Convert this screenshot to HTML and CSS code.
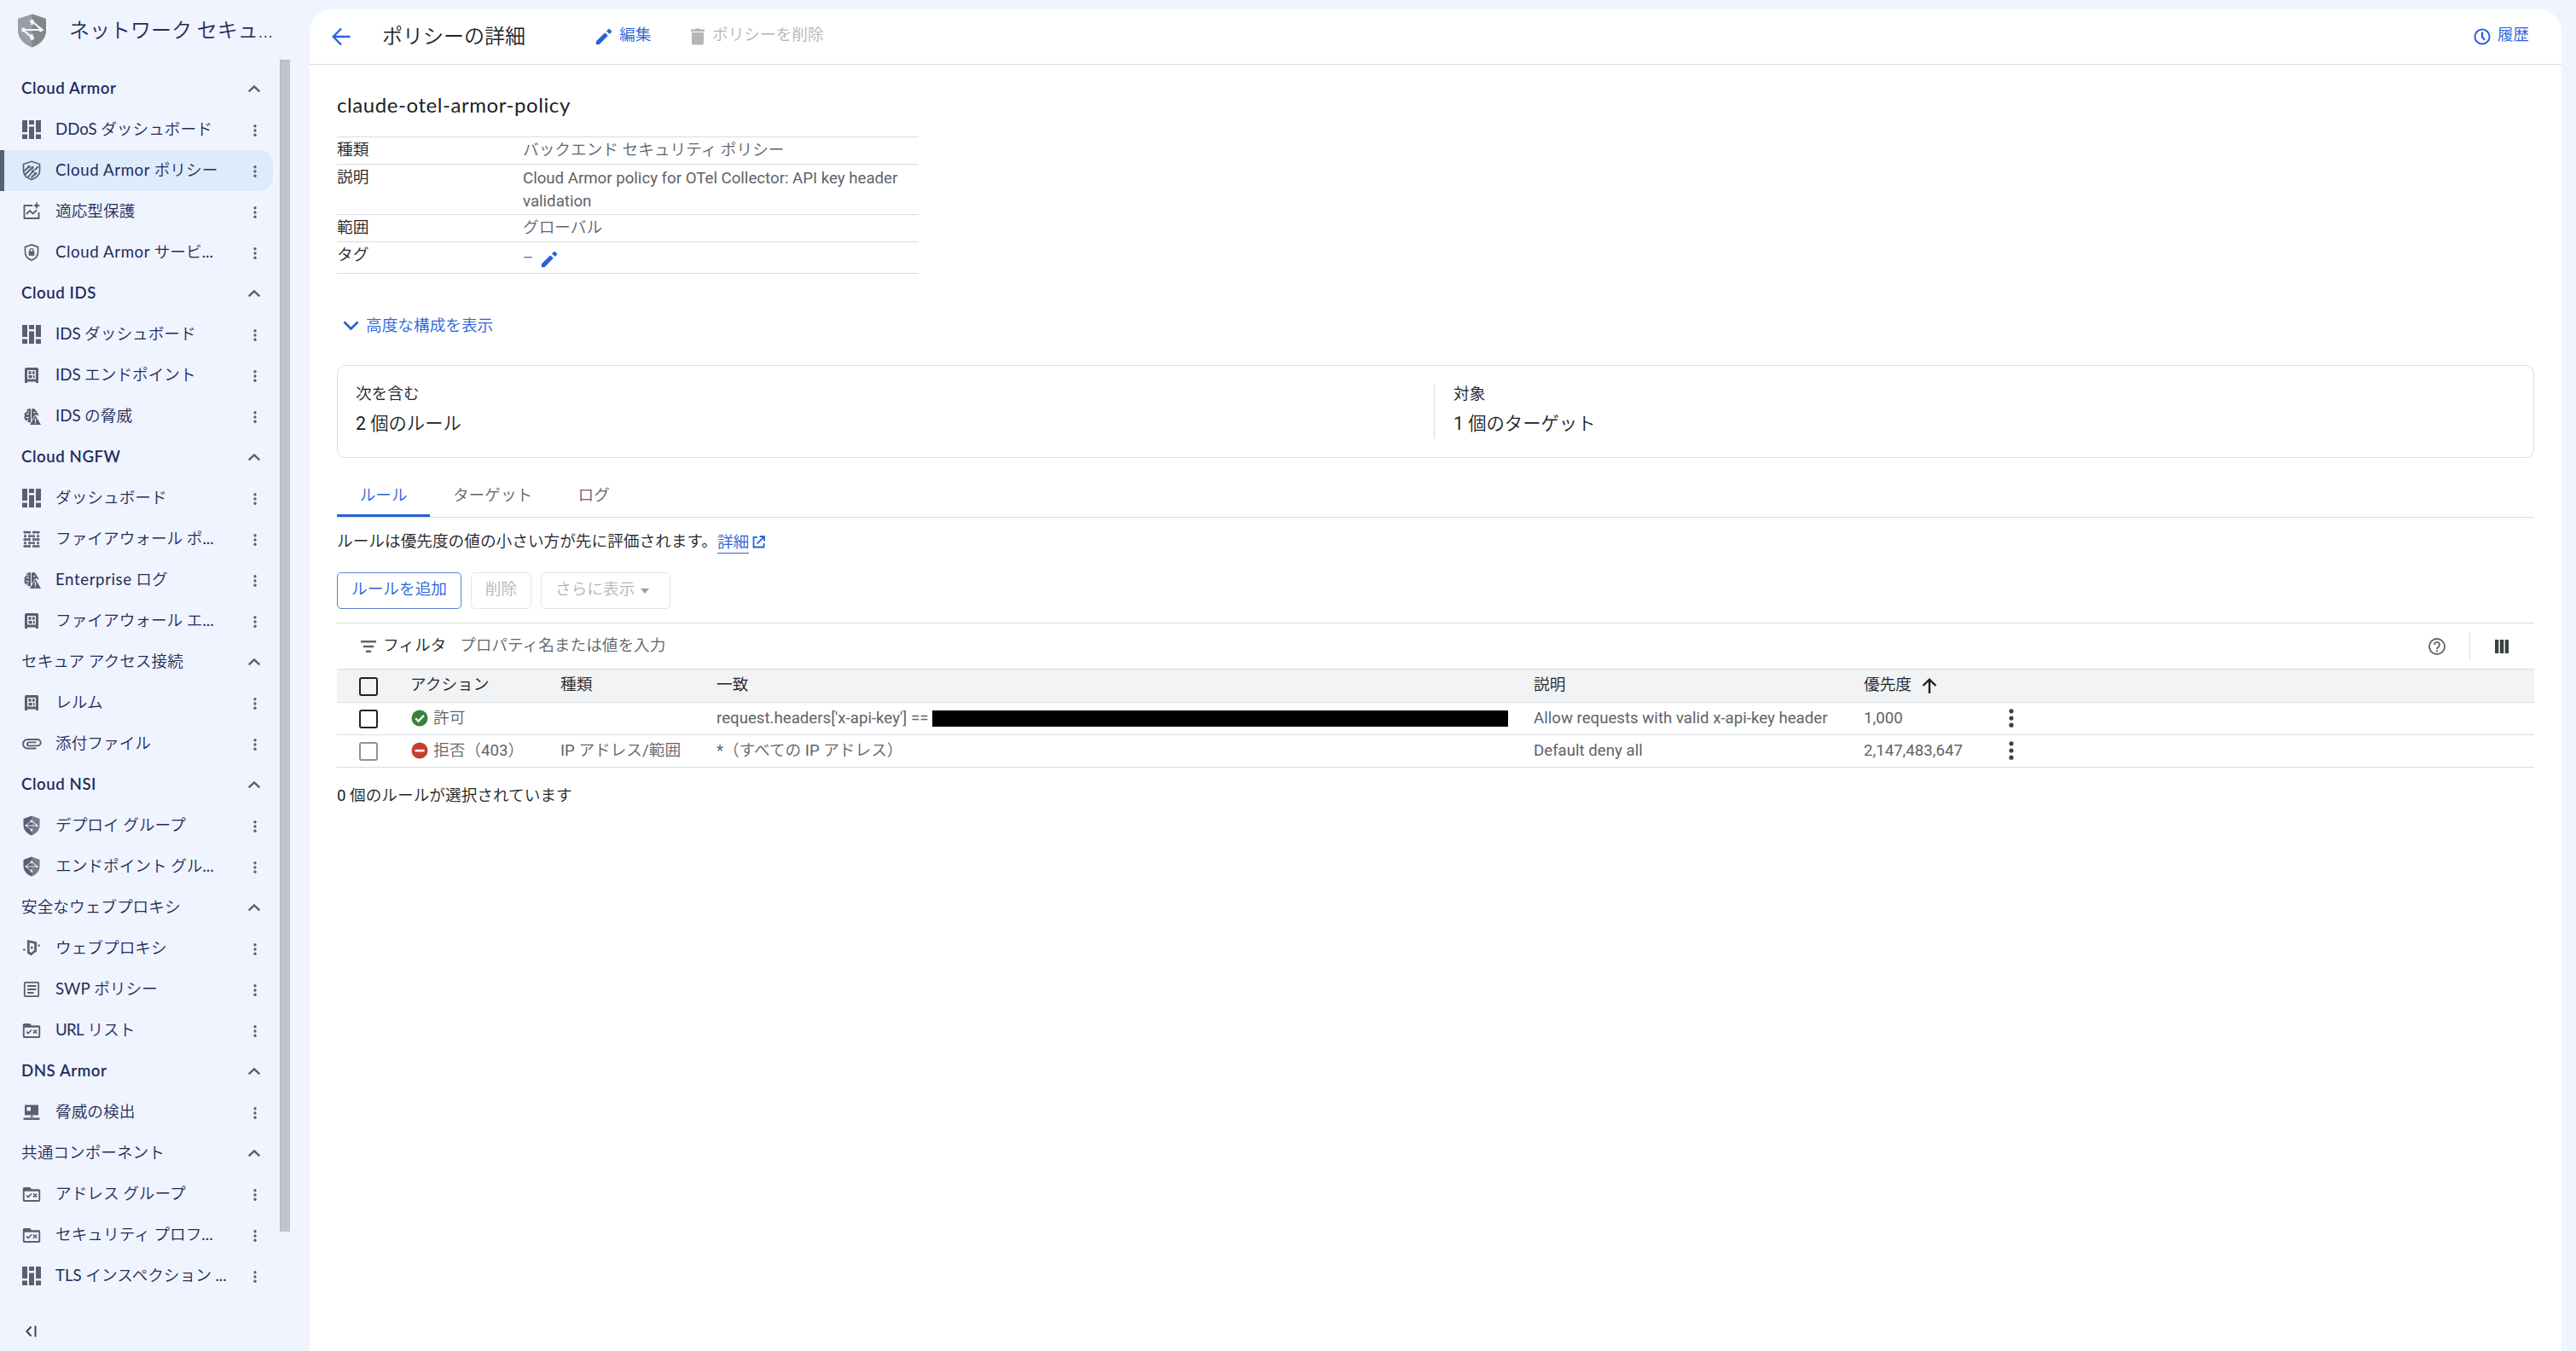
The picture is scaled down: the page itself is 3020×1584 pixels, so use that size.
FILE: index.html
```html
<!DOCTYPE html>
<html lang="ja">
<head>
<meta charset="utf-8">
<title>ポリシーの詳細</title>
<link rel="stylesheet" href="styles.css">
</head>
<body>
<svg class="sprite" aria-hidden="true">
  <symbol id="dash" viewBox="0 0 24 24"><path d="M1 1h6v14H1zM1 17.5h6V23H1zM9 1h6v5H9zM9 8.500h6V23H9zM17 1h6v14h-6zM17 17.500h6V23h-6z"/></symbol>
  <symbol id="armor" viewBox="0 0 24 24"><path d="M12 1.300 21.500 4.500V12c0 5-4 8.700-9.500 10.700C6.500 20.700 2.500 17 2.500 12V4.500z" fill="none" stroke="currentColor" stroke-width="1.700"/><path d="M3.500 12.500 9 7.300M4.500 16.500l8.500-8M8 19.500l5.500-6.500M11.500 20.500l5-5M15.500 11.500 20 7" fill="none" stroke="currentColor" stroke-width="1.900"/><circle cx="9" cy="7.500" r="1.700"/><circle cx="13" cy="8.500" r="1.700"/><circle cx="13.500" cy="12.700" r="1.700"/><circle cx="16.500" cy="15.500" r="1.700"/></symbol>
  <symbol id="adaptive" viewBox="0 0 24 24"><path d="M13 5H3.500v15h17v-7" fill="none" stroke="currentColor" stroke-width="1.900"/><path d="m6 15 4-4 3.500 3.500L18 10.500" fill="none" stroke="currentColor" stroke-width="1.900"/><path d="m18 .5 1.300 3.200L22.500 5l-3.200 1.300L18 9.500l-1.300-3.200L13.500 5l3.200-1.300z"/></symbol>
  <symbol id="lockshield" viewBox="0 0 24 24"><path d="m12 2.900 7.500 2.800v6c0 4.400-3 7.600-7.500 9.400-4.500-1.800-7.500-5-7.500-9.400v-6z" fill="none" stroke="currentColor" stroke-width="1.700"/><path d="M8.700 10.500h6.600v5.300H8.700z"/><path d="M10 11V9.700a2 2 0 0 1 4 0V11" fill="none" stroke="currentColor" stroke-width="1.300"/></symbol>
  <symbol id="endpoint" viewBox="0 0 24 24"><path fill-rule="evenodd" d="M5.500 3h13q1.500 0 1.500 1.500V21h-3v-1.500H7V21H4V4.500Q4 3 5.500 3zM7 6v10.500h10V6zM8.500 7.300h3.200v3.500H8.500zM13 7.300h2.600v3.500H13zM8.500 12h4.200v3.300H8.500zM14 12h1.700v3.300H14z"/></symbol>
  <symbol id="threat" viewBox="0 0 24 24"><path d="M11 3.500v16L8 19l-2-2-2-1-.7-3L4 11l-.6-2L6 7l.5-2.500L9 3zM12 3.500 15 3l2 2 1.500 2.500L20 10v2l-2.500-2-2 1-2.500 4.500-1 1z"/><path d="M6 9.500h3M5.500 13.500H9M14 7.500h2.500M8 5.500v2M7.500 15.500v2" stroke="#f0f4fe" stroke-width="1.100"/><path fill-rule="evenodd" d="M16.500 11 23 22H10zM15.800 14.500v3.700h1.400v-3.700zM15.800 19.200v1.400h1.400v-1.400z"/></symbol>
  <symbol id="wall" viewBox="0 0 24 24"><path d="M2.500 2.700h8.500v2.500H2.500zM13 2.700h8.500v2.500H13zM3 7.500h3v2.300H3zM8 7.500h8v2.300H8zM18 7.500h3v2.300h-3zM2.500 11.300H11v2.500H2.500zM13 11.300h8.500v2.500H13zM3 15.500h3v2.300H3zM8 15.500h8v2.300H8zM18 15.500h3v2.300h-3zM2.500 19.200H11v2.500H2.500zM13 19.200h8.500v2.500H13z"/><path d="M4.500 4v16M9.500 4v16M14.500 4v16M19.500 4v16" stroke="currentColor" stroke-width="1" opacity=".6"/></symbol>
  <symbol id="clip" viewBox="0 0 24 24"><path d="M17.500 17.500H7.300a5.200 5.200 0 0 1 0-10.500H19a3.700 3.700 0 0 1 0 7.400H9a2 2 0 0 1 0-4h8.500" fill="none" stroke="currentColor" stroke-width="1.900"/></symbol>
  <symbol id="net" viewBox="0 0 24 24"><path d="M12 .5 21.500 4v7.500c0 5.700-4 10-9.500 12-5.500-2-9.500-6.300-9.500-12V4z"/><path d="M12 .5 21.500 4v7.500c0 5.700-4 10-9.500 12z" fill="#fff" opacity=".18"/><path d="M5.500 12h13L12 6v2.500M5.500 12l6.500 5.500V15M12 6 5.500 12M18.500 12 12 6" fill="none" stroke="#e8eefa" stroke-width="1"/><g fill="#e8eefa"><circle cx="5.800" cy="12" r="1.300"/><circle cx="18.200" cy="12" r="1.300"/><circle cx="12" cy="6.500" r="1.300"/><circle cx="12" cy="17.500" r="1.300"/></g></symbol>
  <symbol id="proxy" viewBox="0 0 24 24"><path fill-rule="evenodd" d="M6.900 2 18 4.300v11.500l-3.500 2-2.800 2.700-4.800-3zM9.600 5.300v10.500l2 1.300 3.600-3.100V6.600z"/><circle cx="12.300" cy="11" r="1.500"/><circle cx="3.400" cy="13.500" r="1.300"/><circle cx="20.600" cy="8.500" r="1.300"/></symbol>
  <symbol id="doc" viewBox="0 0 24 24"><rect x="3.800" y="3.800" width="16.400" height="16.400" rx="1" fill="none" stroke="currentColor" stroke-width="1.800"/><path d="M7 7h10.500v1.900H7zM7 11h10.500v1.900H7zM7 15h7.500v1.900H7z"/></symbol>
  <symbol id="folder" viewBox="0 0 24 24"><path fill-rule="evenodd" d="M3.500 4H10l2 2.200h8.500q1.700 0 1.700 1.700v11.300q0 1.700-1.700 1.700h-17q-1.700 0-1.700-1.700V5.700Q1.800 4 3.500 4zM3.700 8.700v10.300h16.600V8.700z"/><path d="m6 13.500 2 2 4-4M14 11.500l4.200 4.200M18.200 11.500 14 15.700" fill="none" stroke="currentColor" stroke-width="1.700"/></symbol>
  <symbol id="detect" viewBox="0 0 24 24"><path fill-rule="evenodd" d="M4 3.500h16v12H4zM6.500 6v4.500H11V6zM11 15h2.500v4H11zM2.500 18.500h19V21h-19z"/></symbol>
  <symbol id="more" viewBox="0 0 24 24"><circle cx="12" cy="5" r="2.200"/><circle cx="12" cy="12" r="2.200"/><circle cx="12" cy="19" r="2.200"/></symbol>
  <symbol id="up" viewBox="0 0 24 24"><path d="m2.500 17 9.500-9 9.500 9" fill="none" stroke="currentColor" stroke-width="3.700"/></symbol>
  <symbol id="pencil" viewBox="0 0 24 24"><path d="M1 18.600V23h4.400L17.800 10.600l-4.400-4.400zM22.600 5.800a1.400 1.400 0 0 0 0-2l-2.400-2.400a1.400 1.400 0 0 0-2 0l-2.600 2.600 4.400 4.400z"/></symbol>
</svg>
<div class="app">
  <aside class="side">
    <header class="side-head">
      <svg class="brand" viewBox="0 0 33 40"><path d="M16.500.5 33 6v13.500C33 29 26 36 16.500 39.500 7 36 0 29 0 19.500V6z" fill="#9b9ea4"/><path d="M16.500.5 33 6v13.500C33 29 26 36 16.500 39.500z" fill="#83878a"/><path d="M6 19h22L16.500 9v4.500M6 19l10.500 9v-4" fill="none" stroke="#f4f7fd" stroke-width="2.200"/><g fill="#f4f7fd"><circle cx="6.500" cy="19" r="2.400"/><circle cx="26.500" cy="19" r="2.400"/><circle cx="16.500" cy="9.200" r="2.400"/><circle cx="16.500" cy="28.500" r="2.400"/></g></svg>
      <span>ネットワーク セキュ...</span>
    </header>
    <div class="side-body">
      <nav class="nav">
        <div class="sec"><b>Cloud Armor</b><svg><use href="#up"/></svg></div>
        <a class="item"><svg><use href="#dash"/></svg><span><i>DDoS</i> ダッシュボード</span><svg><use href="#more"/></svg></a>
        <a class="item active"><svg><use href="#armor"/></svg><span><i class="wide">Cloud Armor</i> ポリシー</span><svg><use href="#more"/></svg></a>
        <a class="item"><svg><use href="#adaptive"/></svg><span>適応型保護</span><svg><use href="#more"/></svg></a>
        <a class="item"><svg><use href="#lockshield"/></svg><span><i class="wide">Cloud Armor</i> サービ<i>...</i></span><svg><use href="#more"/></svg></a>
        <div class="sec"><b>Cloud IDS</b><svg><use href="#up"/></svg></div>
        <a class="item"><svg><use href="#dash"/></svg><span><i>IDS</i> ダッシュボード</span><svg><use href="#more"/></svg></a>
        <a class="item"><svg><use href="#endpoint"/></svg><span><i>IDS</i> エンドポイント</span><svg><use href="#more"/></svg></a>
        <a class="item"><svg><use href="#threat"/></svg><span><i>IDS</i> の脅威</span><svg><use href="#more"/></svg></a>
        <div class="sec"><b>Cloud NGFW</b><svg><use href="#up"/></svg></div>
        <a class="item"><svg><use href="#dash"/></svg><span>ダッシュボード</span><svg><use href="#more"/></svg></a>
        <a class="item"><svg><use href="#wall"/></svg><span>ファイアウォール ポ<i>...</i></span><svg><use href="#more"/></svg></a>
        <a class="item"><svg><use href="#threat"/></svg><span><i class="wide">Enterprise</i> ログ</span><svg><use href="#more"/></svg></a>
        <a class="item"><svg><use href="#endpoint"/></svg><span>ファイアウォール エ<i>...</i></span><svg><use href="#more"/></svg></a>
        <div class="sec"><span>セキュア アクセス接続</span><svg><use href="#up"/></svg></div>
        <a class="item"><svg><use href="#endpoint"/></svg><span>レルム</span><svg><use href="#more"/></svg></a>
        <a class="item"><svg><use href="#clip"/></svg><span>添付ファイル</span><svg><use href="#more"/></svg></a>
        <div class="sec"><b>Cloud NSI</b><svg><use href="#up"/></svg></div>
        <a class="item"><svg><use href="#net"/></svg><span>デプロイ グループ</span><svg><use href="#more"/></svg></a>
        <a class="item"><svg><use href="#net"/></svg><span>エンドポイント グル<i>...</i></span><svg><use href="#more"/></svg></a>
        <div class="sec"><span>安全なウェブプロキシ</span><svg><use href="#up"/></svg></div>
        <a class="item"><svg><use href="#proxy"/></svg><span>ウェブプロキシ</span><svg><use href="#more"/></svg></a>
        <a class="item"><svg><use href="#doc"/></svg><span><i>SWP</i> ポリシー</span><svg><use href="#more"/></svg></a>
        <a class="item"><svg><use href="#folder"/></svg><span><i class="tight">URL</i> リスト</span><svg><use href="#more"/></svg></a>
        <div class="sec"><b>DNS Armor</b><svg><use href="#up"/></svg></div>
        <a class="item"><svg><use href="#detect"/></svg><span>脅威の検出</span><svg><use href="#more"/></svg></a>
        <div class="sec"><span>共通コンポーネント</span><svg><use href="#up"/></svg></div>
        <a class="item"><svg><use href="#folder"/></svg><span>アドレス グループ</span><svg><use href="#more"/></svg></a>
        <a class="item"><svg><use href="#folder"/></svg><span>セキュリティ プロフ<i>...</i></span><svg><use href="#more"/></svg></a>
        <a class="item"><svg><use href="#dash"/></svg><span><i>TLS</i> インスペクション <i>...</i></span><svg><use href="#more"/></svg></a>
      </nav>
      <div class="scrollbar"></div>
    </div>
    <footer class="side-foot"><svg viewBox="0 0 13 14"><path d="M6.500 1.500 1.300 7l5.200 5.500M11.500.5v13" fill="none" stroke="#3c4043" stroke-width="1.900"/></svg></footer>
  </aside>

  <main class="panel">
    <header class="bar">
      <svg class="back" viewBox="0 0 22 22"><path d="M21.500 11H2M11 1.500 1.700 11l9.300 9.500" fill="none" stroke="currentColor" stroke-width="2.300"/></svg>
      <h1>ポリシーの詳細</h1>
      <a class="act edit"><svg><use href="#pencil"/></svg><span>編集</span></a>
      <a class="act del"><svg viewBox="0 0 16 20"><path d="M1 5h14v12.500q0 2-2 2H3q-2 0-2-2zM0 1.500h4.500L5.500.5h5l1 1H16V4H0z"/></svg><span>ポリシーを削除</span></a>
      <a class="act hist"><svg viewBox="0 0 20 20"><circle cx="10" cy="10" r="8.600" fill="none" stroke="currentColor" stroke-width="2"/><path d="M10 4.500v6l3.200 3.200" fill="none" stroke="currentColor" stroke-width="2.300"/></svg><span>履歴</span></a>
    </header>

    <div class="content">
      <h2>claude-otel-armor-policy</h2>
      <dl class="props">
        <div><dt>種類</dt><dd>バックエンド セキュリティ ポリシー</dd></div>
        <div><dt>説明</dt><dd class="en drop">Cloud Armor policy for OTel Collector: API key header<br>validation</dd></div>
        <div><dt>範囲</dt><dd>グローバル</dd></div>
        <div class="tags"><dt>タグ</dt><dd><span class="num">–</span><svg><use href="#pencil"/></svg></dd></div>
      </dl>
      <a class="adv"><svg viewBox="0 0 19 12"><path d="m1.500 1.500 8 8 8-8" fill="none" stroke="currentColor" stroke-width="2.700"/></svg><span>高度な構成を表示</span></a>

      <section class="card">
        <div><p>次を含む</p><strong><b class="num">2</b> 個のルール</strong></div>
        <div><p>対象</p><strong><b class="num">1</b> 個のターゲット</strong></div>
      </section>

      <div class="tabs"><a class="on">ルール</a><a>ターゲット</a><a>ログ</a></div>

      <p class="desc"><span>ルールは優先度の値の小さい方が先に評価されます。</span><a>詳細</a><svg viewBox="0 0 15 15"><path d="M6 1.800H1.500v11.700h12V9M8.500 1h5.500v5.500M13.700 1.300 5.500 9.500" fill="none" stroke="currentColor" stroke-width="1.800"/></svg></p>

      <div class="btns"><button class="pri">ルールを追加</button><button class="b2">削除</button><button class="b3"><span>さらに表示</span><i class="tri"></i></button></div>

      <div class="table">
        <div class="filter">
          <svg class="f-ico" viewBox="0 0 18 14"><path d="M0 0h18v2.600H0zM2.800 5.700h12.400v2.600H2.800zM6 11.400h6V14H6z"/></svg>
          <span class="f-name">フィルタ</span>
          <span class="f-ph">プロパティ名または値を入力</span>
          <svg class="help" viewBox="0 0 20 20"><circle cx="10" cy="10" r="9" fill="none" stroke="currentColor" stroke-width="1.800"/><path d="M7 8a3 3 0 1 1 4.700 2.400Q10 11.500 10 13" fill="none" stroke="currentColor" stroke-width="1.800"/><path d="M9 14.300h2v2H9z"/></svg>
          <i class="rule"></i>
          <svg class="cols" viewBox="0 0 16 16"><path d="M0 0h4.300v16H0zM5.800 0h4.500v16H5.800zM11.800 0H16v16h-4.200z"/></svg>
        </div>
        <div class="row head"><i class="cb"></i><span>アクション</span><span>種類</span><span>一致</span><span>説明</span><span class="sort">優先度<svg viewBox="0 0 18 18"><path d="M9 18V2M1.500 9 9 1.700 16.500 9" fill="none" stroke="currentColor" stroke-width="2.400"/></svg></span></div>
        <div class="row"><i class="cb"></i><span class="st"><svg viewBox="0 0 20 20"><circle cx="10" cy="10" r="9.500" fill="#3a7f3e"/><path d="m5.200 10.300 3.300 3.300 6.500-6.800" fill="none" stroke="#fff" stroke-width="2.200"/></svg>許可</span><span></span><span class="en match">request.headers['x-api-key'] == <i class="redact"></i></span><span class="en">Allow requests with valid x-api-key header</span><span class="en">1,000</span><svg class="dots"><use href="#more"/></svg></div>
        <div class="row"><i class="cb off"></i><span class="st"><svg viewBox="0 0 20 20"><circle cx="10" cy="10" r="9.500" fill="#c53d2f"/><path d="M4.500 8.800h11v2.600h-11z" fill="#fff"/></svg>拒否（<b class="num">403</b>）</span><span><b class="num">IP</b> アドレス<b class="num">/</b>範囲</span><span><b class="num">*</b>（すべての <b class="num">IP</b> アドレス）</span><span class="en">Default deny all</span><span class="en">2,147,483,647</span><svg class="dots"><use href="#more"/></svg></div>
      </div>
      <p class="foot"><b class="num">0</b> 個のルールが選択されています</p>
    </div>
  </main>
</div>
</body>
</html>
```
FILE: styles.css
```css
* { box-sizing: border-box; margin: 0; padding: 0; }
html, body { height: 100%; }
body {
  --blue: #2962d9;
  --line: #dadce0;
  background: #f0f4fe;
  color: #202124;
  font: 350 18.67px/26.67px Roboto, "Noto Sans CJK JP", sans-serif;
  overflow: hidden;
}
i { font-style: normal; }
svg { display: block; flex: none; fill: currentColor; }
.num { font-weight: 400; }
.sprite { position: absolute; width: 0; height: 0; }
.app { display: flex; height: 1584px; }

.side { width: 363px; display: flex; flex-direction: column; color: #1f2c5c; }
.side-head { height: 70px; padding: 2px 0 0 21px; display: flex; align-items: center; font-size: 24px; white-space: nowrap; }
.brand { width: 33px; height: 40px; margin-right: 27px; }
.side-body { display: flex; height: 1450px; }
.nav { width: 320px; padding-top: 10px; margin-right: 8px; }
.scrollbar { width: 12px; height: 1374px; background: #c0c2cc; border-left: 1px solid #b3b5bf; border-top: 1px solid #b3b5bf; }
.sec, .item { display: flex; align-items: center; height: 48px; white-space: nowrap; }
.sec { justify-content: space-between; padding: 0 14px 0 25px; }
.sec b { font-family: Lato, sans-serif; font-weight: 600; letter-spacing: .55px; padding-bottom: 2px; }
.sec svg { width: 16px; height: 16px; color: #5a6072; }
.item { padding: 2px 10px 0 25px; }
.item svg { width: 24px; height: 24px; margin-bottom: 2px; color: #5a6072; }
.item > span { flex: 1; margin-left: 16px; padding-bottom: 2px; }
.item span i { font-family: Lato, sans-serif; font-weight: 400; }
.item .wide { letter-spacing: .6px; }
.item .tight { letter-spacing: -.7px; }
.item svg:last-child { width: 22px; height: 18px; margin-bottom: 0; }
.item.active { background: #deebfa; border-left: 5px solid #585e74; border-radius: 0 16px 16px 0; padding-left: 20px; }
.side-foot { padding: 34px 0 0 30px; }
.side-foot svg { width: 13px; height: 14px; }

.panel { width: 2640px; margin-top: 11px; background: #fff; border-radius: 26px 26px 0 0; }
.bar { height: 65px; border-bottom: 1px solid var(--line); display: flex; align-items: center; padding-left: 26px; white-space: nowrap; }
.bar h1 { font-size: 24px; font-weight: 350; line-height: 32px; width: 250px; padding-bottom: 1px; }
.back { width: 22px; height: 22px; color: var(--blue); margin-right: 37px; }
.act { display: flex; align-items: center; color: var(--blue); }
.act span { padding-bottom: 3px; }
.edit svg { width: 20px; height: 20px; margin-right: 8px; }
.edit { width: 112px; }
.del { color: #b3b5b8; }
.del svg { width: 16px; height: 20px; margin-right: 9px; }
.hist { margin-left: auto; margin-right: 38px; }
.hist svg { width: 20px; height: 20px; margin-right: 8px; }

.content { padding: 31px 32px 0; }
h2 { font: 400 24px/32px Lato, sans-serif; letter-spacing: .57px; }
.props { width: 682px; margin-top: 21px; border-top: 1px solid var(--line); }
.props div { display: flex; border-bottom: 1px solid var(--line); padding: 2px 0 2.330px; }
.props dt { width: 218px; }
.props dd { color: #5f6368; }
.en { font-weight: 400; color: #5f6368; }
.props .drop { padding-top: 1px; margin-bottom: -1px; }
.props .tags dd { display: flex; align-items: center; gap: 9px; height: 31.670px; padding-top: 5px; }
.tags dd span { padding-bottom: 5px; margin-bottom: -1px; }
.tags svg { width: 20px; height: 20px; color: var(--blue); }
.adv { display: flex; align-items: center; color: var(--blue); margin: 48px 0 0 7px; }
.adv svg { width: 19px; height: 12px; margin-right: 8px; }

.card { margin-top: 33px; height: 109px; border: 1px solid var(--line); border-radius: 10px; display: flex; padding: 21px; }
.card div { width: 1265px; height: 64px; border-right: 1px solid var(--line); }
.card div + div { padding-left: 22px; border: 0; }
.card p { margin-top: -1px; }
.card strong { display: block; font-size: 21.330px; font-weight: 350; line-height: 32px; margin-top: 5px; }

.tabs { display: flex; height: 54px; margin-top: 16px; border-bottom: 1px solid var(--line); color: #5f6368; }
.tabs a { height: 53px; padding: 15px 26.670px 0; }
.tabs .on { color: var(--blue); border-bottom: 3px solid var(--blue); }
.desc { display: flex; align-items: center; margin-top: 15px; height: 27px; }
.desc a { color: var(--blue); border-bottom: 1px solid var(--blue); height: 26px; }
.desc svg { width: 15px; height: 15px; color: var(--blue); margin-left: 4px; }
.btns { display: flex; gap: 11px; margin-top: 22px; }
.btns button { height: 43px; border: 1px solid #e3e5e8; border-radius: 5px; background: #fff; font: inherit; color: #b3b5b8; padding-bottom: 3px; white-space: nowrap; }
.btns .pri { width: 146px; color: var(--blue); border-color: #5b80d0; }
.btns .b2 { width: 71px; }
.btns .b3 { width: 152px; display: flex; align-items: center; padding-left: 16px; gap: 7px; }
.tri { border: 5.500px solid transparent; border-top: 6px solid #9aa0a6; border-bottom: 0; margin-top: 3px; }

.table { margin-top: 16px; border-top: 1px solid var(--line); }
.filter { display: flex; align-items: center; height: 53px; padding-left: 28px; white-space: nowrap; }
.f-ico { width: 18px; height: 14px; color: #5f6368; margin-right: 8px; }
.f-name { width: 90px; }
.f-ph { color: #5f6368; width: 2308px; padding-bottom: 1px; }
.help { width: 20px; height: 20px; color: #5f6368; }
.rule { width: 1px; height: 32px; background: var(--line); margin: 0 29px 0 28px; }
.cols { width: 16px; height: 16px; color: #3c4043; }
.row { display: grid; grid-template-columns: 60px 176px 183px 958px 387px 159px 28px; align-items: center; height: 38px; padding-left: 26px; border-bottom: 1px solid var(--line); color: #5f6368; white-space: nowrap; }
.row span { padding-bottom: 1px; }
.head { background: #f1f3f4; border-top: 1px solid var(--line); height: 40px; color: #202124; }
.head .cb { margin-top: 1px; }
.cb { width: 22px; height: 22px; border: 2px solid #202124; border-radius: 3px; }
.cb.off { border-color: #8f9296; }
.st, .match, .sort { display: flex; align-items: center; }
.st svg { width: 20px; height: 20px; margin: 0 6px 0 1px; }
.sort svg { width: 18px; height: 18px; margin-left: 12px; }
.redact { width: 675px; height: 19px; background: #000; margin-left: 5px; }
.dots { width: 28px; height: 28px; margin-bottom: 2px; color: #3c4043; }
.foot { margin-top: 20px; }
```
